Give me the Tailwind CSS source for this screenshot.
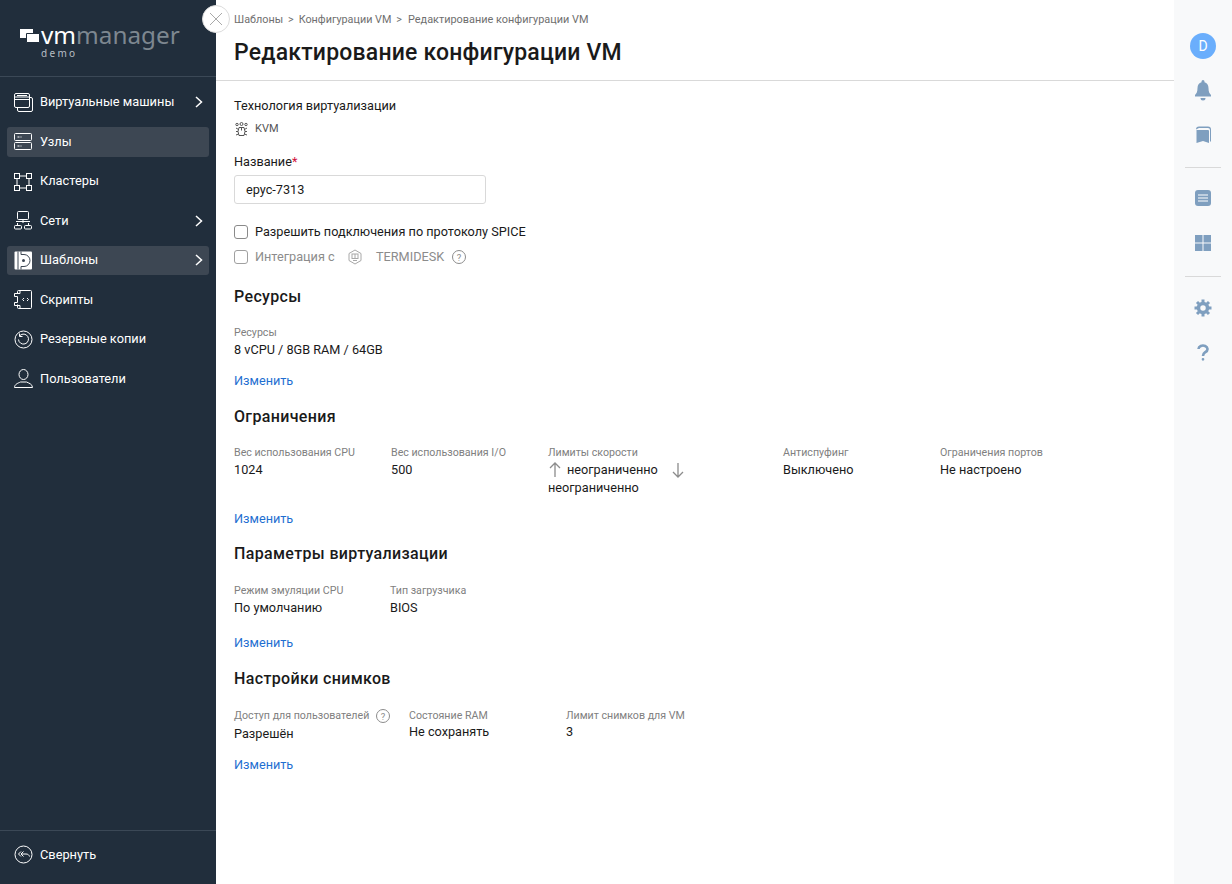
<!DOCTYPE html>
<html lang="ru">
<head>
<meta charset="UTF-8">
<title>Редактирование конфигурации VM</title>
<script src="https://cdn.jsdelivr.net/npm/@tailwindcss/browser@4"></script>
</head>
<body class="bg-white font-['Roboto',sans-serif] text-[12.7px] leading-[18px] text-[#1a1a1a]">
<div class="relative flex h-[884px] w-[1232px] overflow-hidden">

  <!-- sidebar -->
  <aside class="flex w-[216px] shrink-0 flex-col bg-[#212e3c] text-white">
    <div class="h-[77px] shrink-0 border-b border-[#3b4856] pl-[20px] pt-[22px]">
      <div class="flex h-[26px] items-center">
        <svg width="20" height="14" viewBox="0 0 20 14" class="mr-[1px] mt-[1px]"><path d="M0 0h13v9H0z" fill="#fff"/><path d="M6.500 4.500h13v9h-13z" fill="#fff" stroke="#212e3c"/></svg>
        <span class="font-['Noto_Sans',sans-serif] text-[24.3px] leading-[26px]"><span class="text-white">vm</span><span class="text-[#7d8790]">manager</span></span>
      </div>
      <div class="ml-[21px] font-['Noto_Sans',sans-serif] text-[10px] leading-[10px] tracking-[2.300px] text-[#b8bec4]">demo</div>
    </div>

    <nav class="flex flex-col gap-[10px] px-[7px] pt-[10.500px] text-[12.8px]">
      <a class="flex h-[29.5px] items-center rounded-[3px] pl-[7px] pr-[6px]">
        <svg class="mr-[7px]" width="19" height="19" viewBox="0 0 19 19" fill="none" stroke="#fff"><rect x=".5" y=".5" width="15" height="14" rx="1.5"/><path d="M1 4h14M1 6.500h14M3 2.500h10"/><path d="M16 4.500h1a1.500 1.500 0 0 1 1.500 1.500v11a1.500 1.500 0 0 1-1.500 1.500H5a1.500 1.500 0 0 1-1.500-1.500v-2"/></svg>
        <span class="flex-1">Виртуальные машины</span>
        <svg width="8" height="12" viewBox="0 0 8 12" fill="none" stroke="#fff" stroke-width="1.500"><path d="M1 1l5.500 5L1 11"/></svg>
      </a>
      <a class="flex h-[29.5px] items-center rounded-[3px] bg-[#3d4753] pl-[7px] pr-[6px]">
        <svg class="mr-[7px]" width="19" height="19" viewBox="0 0 19 19" fill="none" stroke="#fff"><rect x=".5" y="1.500" width="17" height="7" rx="1"/><rect x=".5" y="10.500" width="17" height="7" rx="1"/><path d="M3.500 5h2M6.500 5h1M3.500 14h2M6.500 14h1"/></svg>
        <span class="flex-1">Узлы</span>
      </a>
      <a class="flex h-[29.5px] items-center rounded-[3px] pl-[7px] pr-[6px]">
        <svg class="mr-[7px]" width="19" height="19" viewBox="0 0 19 19" fill="none" stroke="#fff"><rect x=".5" y="1.500" width="5" height="5"/><rect x="12.500" y="1.500" width="5" height="5"/><rect x=".5" y="13.500" width="5" height="5"/><rect x="12.500" y="13.500" width="5" height="5"/><path d="M6 4h6M6 16h6M3 7v6M15 7v6"/></svg>
        <span class="flex-1">Кластеры</span>
      </a>
      <a class="flex h-[29.5px] items-center rounded-[3px] pl-[7px] pr-[6px]">
        <svg class="mr-[7px]" width="19" height="19" viewBox="0 0 19 19" fill="none" stroke="#fff"><rect x="3.500" y=".5" width="11" height="8" rx="1"/><path d="M2 10.500h14M9 9v3M3.500 12v2M14.500 12v2"/><rect x=".5" y="14.500" width="7" height="3.500" rx="1"/><rect x="10.500" y="14.500" width="7" height="3.500" rx="1"/></svg>
        <span class="flex-1">Сети</span>
        <svg width="8" height="12" viewBox="0 0 8 12" fill="none" stroke="#fff" stroke-width="1.500"><path d="M1 1l5.500 5L1 11"/></svg>
      </a>
      <a class="flex h-[29.5px] items-center rounded-[3px] bg-[#3d4753] pl-[7px] pr-[6px]">
        <svg class="mr-[7px]" width="19" height="19" viewBox="0 0 19 19"><rect x=".5" y=".5" width="17.500" height="18" rx="1" fill="#fff"/><path d="M4 .5v18M7 3.500h3a6 6 0 0 1 0 12H7" fill="none" stroke="#3d4753"/><path d="M7 .5v3M7 15.500v3" stroke="#3d4753"/><circle cx="9.500" cy="9.500" r="1.500" fill="#3d4753"/></svg>
        <span class="flex-1">Шаблоны</span>
        <svg width="8" height="12" viewBox="0 0 8 12" fill="none" stroke="#fff" stroke-width="1.500"><path d="M1 1l5.500 5L1 11"/></svg>
      </a>
      <a class="flex h-[29.5px] items-center rounded-[3px] pl-[7px] pr-[6px]">
        <svg class="mr-[7px]" width="19" height="19" viewBox="0 0 19 19" fill="none" stroke="#fff"><path d="M3.500 3.500v-2a1 1 0 0 1 1-1h12a1 1 0 0 1 1 1v16a1 1 0 0 1-1 1h-12a1 1 0 0 1-1-1v-3"/><path d="M.5 3.500h5.500M.5 3.500v3h3v6h-3v3h5.500M6 .5v3M6 15.500v3"/><path d="M10 8l-1.500 1.500L10 11M13 8l1.500 1.500L13 11"/></svg>
        <span class="flex-1">Скрипты</span>
      </a>
      <a class="flex h-[29.5px] items-center rounded-[3px] pl-[7px] pr-[6px]">
        <svg class="mr-[7px]" width="19" height="19" viewBox="0 0 19 19" fill="none" stroke="#fff"><circle cx="9.500" cy="9.500" r="8.500"/><path d="M6 5.500a5 5 0 1 1-1.500 4"/><path d="M5.500 3.500v3h3"/></svg>
        <span class="flex-1">Резервные копии</span>
      </a>
      <a class="flex h-[29.5px] items-center rounded-[3px] pl-[7px] pr-[6px]">
        <svg class="mr-[7px]" width="19" height="19" viewBox="0 0 19 19" fill="none" stroke="#fff"><ellipse cx="9.500" cy="5.500" rx="4.500" ry="5"/><path d="M.5 18.500c0-3.500 4-4.500 6-5.500h6c2 1 6 2 6 5.500z"/></svg>
        <span class="flex-1">Пользователи</span>
      </a>
    </nav>

    <div class="mt-auto flex h-[54px] items-center border-t border-[#3b4856] pb-[6px] pl-[14px] text-[12.8px]">
      <svg class="mr-[7px]" width="19" height="19" viewBox="0 0 19 19" fill="none" stroke="#fff"><circle cx="9.500" cy="9.500" r="8.500"/><path d="M7 6.500L4.500 9 7 11.500M9.500 6.500L7 9l2.500 2.500M8 9h4c2 0 3 1 3.500 2.500"/></svg>
      <span>Свернуть</span>
    </div>
  </aside>

  <!-- close button -->
  <button class="absolute left-[202px] top-[5px] flex h-[28px] w-[28px] items-center justify-center rounded-full border border-[#dcdcdc] bg-white">
    <svg width="14" height="14" viewBox="0 0 14 14" stroke="#a9a9a9" fill="none"><path d="M1 1l12 12M13 1L1 13"/></svg>
  </button>

  <!-- main -->
  <main class="min-w-0 flex-1">
    <header class="h-[81px] border-b border-[#d9d9d9] pl-[18px] pt-[12px]">
      <div class="flex gap-[5px] text-[10.8px] leading-[16px] text-[#6f6f6f]">
        <span>Шаблоны</span><span>&gt;</span><span>Конфигурации VM</span><span>&gt;</span><span class="ml-[1px] text-[10.9px]">Редактирование конфигурации VM</span>
      </div>
      <h1 class="mt-[6px] text-[23px] font-medium leading-[38px] tracking-[0.2px] text-[#1a1a1a]">Редактирование конфигурации VM</h1>
    </header>

    <div class="pl-[18px]">
      <div class="mt-[16px]">Технология виртуализации</div>
      <div class="mt-[5px] flex h-[18px] items-center text-[11px] text-[#555]">
        <svg class="ml-[1px] mr-[7px]" width="13" height="15" viewBox="0 0 13 15" fill="none" stroke="#555"><path d="M4 5.500h5l1 4-1 4H4l-1-4z"/><path d="M6.500 5.500v3M3 9.500H1M12 9.500h-2M1 13l2.500-1M12 13l-2.500-1M1 6l2.500 1.500M12 6L9.500 7.500"/><circle cx="2" cy="2.500" r="1.200"/><circle cx="11" cy="2.500" r="1.200"/><circle cx="6.500" cy="2" r="1.500"/></svg>
        <span>KVM</span>
      </div>

      <div class="mt-[15px]">Название<span class="text-[#d0103a]">*</span></div>
      <div class="mt-[4px] flex h-[29px] w-[252px] items-center rounded-[3px] border border-[#d9d9d9] pl-[11px] pt-[1px]">epyc-7313</div>

      <label class="mt-[19px] flex h-[18px] items-center">
        <span class="mr-[7px] h-[14px] w-[14px] rounded-[3px] border border-[#8a8a8a]"></span>
        <span>Разрешить подключения по протоколу SPICE</span>
      </label>
      <label class="mt-[7px] flex h-[18px] items-center text-[#8c8c8c]">
        <span class="mr-[7px] h-[14px] w-[14px] rounded-[3px] border border-[#a0a0a0]"></span>
        <span class="w-[80px]">Интеграция с</span>
        <svg class="ml-[12px] mr-[13px]" width="16" height="16" viewBox="0 0 16 16" fill="none" stroke="#a8a8a8"><path d="M8 1l6 3.500v7L8 15l-6-3.500v-7z"/><rect x="5" y="5" width="6" height="4.500"/><path d="M8 5v4.500M6 11.500h4"/></svg>
        <span class="w-[69px]">TERMIDESK</span>
        <svg class="ml-[7px]" width="14" height="14" viewBox="0 0 14 14" fill="none" stroke="#8c8c8c"><circle cx="7" cy="7" r="6.500"/><text x="7" y="10.500" text-anchor="middle" font-size="9.500" fill="#8c8c8c" stroke="none">?</text></svg>
      </label>

      <h2 class="mt-[21px] text-[16px] font-medium leading-[20px] tracking-[0.35px]">Ресурсы</h2>
      <div class="mt-[18px] text-[10.650px] leading-[16px] text-[#808080]">Ресурсы</div>
      <div>8 vCPU / 8GB RAM / 64GB</div>
      <a class="mt-[13px] block text-[#1f6fd1]">Изменить</a>

      <h2 class="mt-[17px] text-[16px] font-medium leading-[20px] tracking-[0.35px]">Ограничения</h2>
      <div class="mt-[18px] flex">
        <div class="w-[157px]">
          <div class="text-[10.650px] leading-[16px] text-[#808080]">Вес использования CPU</div>
          <div>1024</div>
        </div>
        <div class="w-[157px]">
          <div class="text-[10.650px] leading-[16px] text-[#808080]">Вес использования I/O</div>
          <div>500</div>
        </div>
        <div class="w-[235px]">
          <div class="text-[10.650px] leading-[16px] text-[#808080]">Лимиты скорости</div>
          <div class="flex items-center">
            <svg class="ml-[1px] mr-[6px]" width="12" height="16" viewBox="0 0 12 16" fill="none" stroke="#8c8c8c" stroke-width="1.300"><path d="M6 15V1M1 6l5-5 5 5"/></svg>
            <span class="w-[93px]">неограниченно</span>
            <svg class="ml-[12px]" width="12" height="16" viewBox="0 0 12 16" fill="none" stroke="#8c8c8c" stroke-width="1.300"><path d="M6 1v14M1 10l5 5 5-5"/></svg>
          </div>
          <div>неограниченно</div>
        </div>
        <div class="w-[157px]">
          <div class="text-[10.650px] leading-[16px] text-[#808080]">Антиспуфинг</div>
          <div>Выключено</div>
        </div>
        <div>
          <div class="text-[10.650px] leading-[16px] text-[#808080]">Ограничения портов</div>
          <div>Не настроено</div>
        </div>
      </div>
      <a class="mt-[13px] block text-[#1f6fd1]">Изменить</a>

      <h2 class="mt-[16px] text-[16px] font-medium leading-[20px] tracking-[0.35px]">Параметры виртуализации</h2>
      <div class="mt-[19px] flex">
        <div class="w-[156px]">
          <div class="text-[10.650px] leading-[16px] text-[#808080]">Режим эмуляции CPU</div>
          <div>По умолчанию</div>
        </div>
        <div>
          <div class="text-[10.650px] leading-[16px] text-[#808080]">Тип загрузчика</div>
          <div>BIOS</div>
        </div>
      </div>
      <a class="mt-[17px] block text-[#1f6fd1]">Изменить</a>

      <h2 class="mt-[17px] text-[16px] font-medium leading-[20px] tracking-[0.35px]">Настройки снимков</h2>
      <div class="mt-[19px] flex">
        <div class="w-[175px]">
          <div class="flex items-center text-[10.650px] leading-[16px] text-[#808080]">
            <span>Доступ для пользователей</span>
            <svg class="ml-[7px]" width="14" height="14" viewBox="0 0 14 14" fill="none" stroke="#8c8c8c"><circle cx="7" cy="7" r="6.500"/><text x="7" y="10.500" text-anchor="middle" font-size="9.500" fill="#8c8c8c" stroke="none">?</text></svg>
          </div>
          <div class="mt-[1px]">Разрешён</div>
        </div>
        <div class="w-[157px]">
          <div class="text-[10.650px] leading-[16px] text-[#808080]">Состояние RAM</div>
          <div class="-mt-[1px]">Не сохранять</div>
        </div>
        <div>
          <div class="text-[10.650px] leading-[16px] text-[#808080]">Лимит снимков для VM</div>
          <div class="-mt-[1px]">3</div>
        </div>
      </div>
      <a class="mt-[13px] block text-[#1f6fd1]">Изменить</a>
    </div>
  </main>

  <!-- right rail -->
  <aside class="flex w-[58px] shrink-0 flex-col items-center bg-[#f8f9fa] pt-[33px]">
    <div class="flex h-[26px] w-[26px] items-center justify-center rounded-full bg-[#6aaefc] text-[14px] text-white">D</div>
    <svg class="mt-[21px]" width="16" height="21" viewBox="0 0 16 21" fill="#7f9fbf"><path d="M8 0a1.500 1.500 0 0 1 1.500 1.500v.7C12 3 13.500 5 13.500 8c0 4 1 5.500 2.500 7v1.500H0V15c1.500-1.500 2.500-3 2.500-7 0-3 1.500-5 4-5.800v-.7A1.500 1.500 0 0 1 8 0z"/><path d="M5.500 18h5a2.500 2.500 0 0 1-5 0z"/></svg>
    <svg class="mt-[25px]" width="15" height="17" viewBox="0 0 15 17" fill="#7f9fbf"><path d="M0 3.500A3 3 0 0 1 3 .5h9a3 3 0 0 1 3 3V15l-1 1V4a2 2 0 0 0-2-2H3a1.500 1.500 0 0 0-1 .5z"/><path d="M.5 4h11.500a1 1 0 0 1 1 1v12l-6-2-6.500 2z"/></svg>
    <div class="mt-[24px] h-px w-[36px] bg-[#d9d9d9]"></div>
    <svg class="mt-[22px]" width="16" height="16" viewBox="0 0 16 16"><rect width="16" height="16" rx="3" fill="#7f9fbf"/><path d="M3 5h10M3 8h10M3 11h10" stroke="#fff" stroke-width="1.200"/></svg>
    <svg class="mt-[29px]" width="16" height="16" viewBox="0 0 16 16" fill="#7f9fbf"><rect width="7.500" height="7.500"/><rect x="8.500" width="7.500" height="7.500"/><rect y="8.500" width="7.500" height="7.500"/><rect x="8.500" y="8.500" width="7.500" height="7.500"/></svg>
    <div class="mt-[25px] h-px w-[36px] bg-[#d9d9d9]"></div>
    <svg class="mt-[22px]" width="18" height="18" viewBox="0 0 18 18" fill="none" stroke="#7f9fbf"><circle cx="9" cy="9" r="4.500" stroke-width="3.500"/><path d="M9 0.500v3M9 14.500v3M.5 9h3M14.500 9h3M3 3l2 2M13 13l2 2M15 3l-2 2M5 13l-2 2" stroke-width="3"/></svg>
    <svg class="mt-[27px]" width="12" height="17" viewBox="0 0 12 17" fill="none" stroke="#7f9fbf" stroke-width="2.600"><path d="M1.500 5a4.500 3.500 0 1 1 7 3C7 9 6 9.500 6 12"/><circle cx="6" cy="15.300" r=".6" fill="#7f9fbf" stroke-width="1.500"/></svg>
  </aside>
</div>
</body>
</html>
